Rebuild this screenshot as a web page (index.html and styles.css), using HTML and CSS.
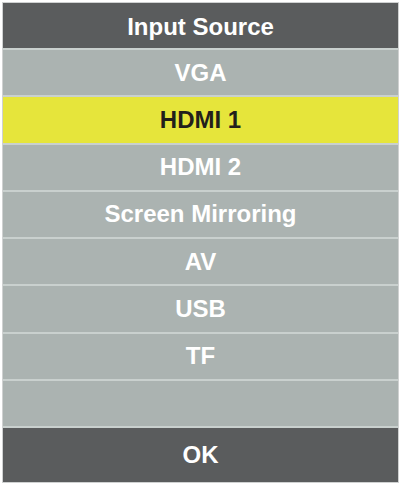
FILE: index.html
```html
<!DOCTYPE html>
<html>
<head>
<meta charset="utf-8">
<link rel="stylesheet" href="styles.css">
</head>
<body>
<div class="panel">
  <div class="header">Input Source</div>
  <div class="list">
    <div class="row">VGA</div>
    <div class="row selected">HDMI 1</div>
    <div class="row">HDMI 2</div>
    <div class="row">Screen Mirroring</div>
    <div class="row">AV</div>
    <div class="row">USB</div>
    <div class="row">TF</div>
    <div class="row"></div>
  </div>
  <div class="footer">OK</div>
</div>
</body>
</html>
```
FILE: styles.css
```css
html, body {
  margin: 0;
  padding: 0;
  background: #ffffff;
}
.panel {
  margin: 2px;
  width: 395px;
  height: 479px;
  border: 1px solid #cfd1d1;
  display: flex;
  flex-direction: column;
  font-family: "Liberation Sans", Arial, sans-serif;
  font-weight: bold;
  font-size: 24px;
}
.header, .footer {
  background: #5a5c5d;
  color: #ffffff;
  display: flex;
  align-items: center;
  justify-content: center;
}
.header {
  height: 43px;
  padding-top: 2px;
}
.list {
  display: flex;
  flex-direction: column;
}
.row {
  height: 45.25px;
  border-top: 2px solid #c9d0ce;
  background: #abb3b1;
  color: #ffffff;
  display: flex;
  align-items: center;
  justify-content: center;
}
.row.selected {
  background: #e6e53b;
  color: #231f1b;
}
.footer {
  flex: 1;
  border-top: 2px solid #c9d0ce;
}
```
